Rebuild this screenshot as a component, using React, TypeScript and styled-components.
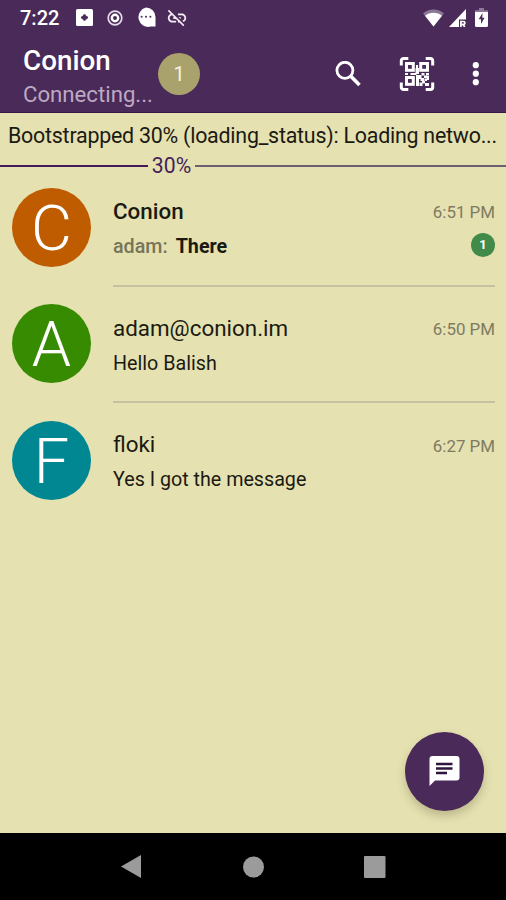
import React from "react";
import styled, { createGlobalStyle } from "styled-components";

const PURPLE = "#4a2a58";
const SAND = "#e5e1b1";

const GlobalStyle = createGlobalStyle`
  * { box-sizing: border-box; }
  body { margin: 0; background: ${SAND}; }
`;

const Screen = styled.div`
  position: relative;
  display: flex;
  flex-direction: column;
  width: 506px;
  height: 900px;
  overflow: hidden;
  background: ${SAND};
  font-family: Roboto, "Liberation Sans", sans-serif;
  color: #1b1a12;
`;

const StatusBar = styled.header`
  display: flex;
  align-items: center;
  justify-content: space-between;
  height: 35px;
  padding: 0 18px 0 20px;
  background: ${PURPLE};
  color: #fff;
`;

const StatusGroup = styled.div`
  display: flex;
  align-items: center;
  svg { display: block; }
`;

const Clock = styled.span`
  width: 56px;
  padding-top: 1px;
  font-size: 20px;
  font-weight: 500;
  line-height: 35px;
`;

const Gap = styled.span<{ $w: number }>`
  width: ${(p) => p.$w}px;
`;

const AppBar = styled.div`
  display: flex;
  align-items: center;
  height: 78px;
  padding: 0 17px 0 23px;
  background: ${PURPLE};
  border-bottom: 1px solid #3a1649;
  color: #fff;
`;

const TitleBlock = styled.div`
  width: 135px;
  padding-top: 7px;
  white-space: nowrap;
`;

const Title = styled.h1`
  margin: 0;
  font-size: 27.8px;
  font-weight: 500;
  line-height: 34px;
`;

const Subtitle = styled.div`
  font-size: 22.2px;
  line-height: 33px;
  color: #bda9c4;
`;

const CountBadge = styled.div`
  width: 42px;
  height: 42px;
  margin-right: auto;
  border-radius: 50%;
  background: #a9a26c;
  color: #f5f2e4;
  font-size: 20px;
  line-height: 43px;
  text-align: center;
`;

const IconButton = styled.button<{ $mr?: number }>`
  display: flex;
  padding: 0;
  margin: 0 ${(p) => p.$mr ?? 0}px 0 0;
  border: 0;
  background: none;
  color: inherit;
`;

const Notice = styled.div`
  height: 44px;
  padding: 0 8px;
  font-size: 21.4px;
  letter-spacing: -0.23px;
  line-height: 45px;
  white-space: nowrap;
`;

const Progress = styled.div`
  display: flex;
  align-items: center;
  height: 18px;
`;

const Track = styled.span<{ $done?: boolean }>`
  height: 2px;
  ${(p) => (p.$done ? "width: 148px;" : "flex: 1;")}
  background: ${(p) => (p.$done ? "#441a58" : "#6d6070")};
`;

const Percent = styled.span`
  width: 47px;
  font-size: 21.2px;
  line-height: 20px;
  text-align: center;
  color: #44245a;
`;

const ChatList = styled.main`
  flex: 1;
  padding-top: 13px;
`;

const Row = styled.article`
  display: flex;
  height: 116.3px;
  padding: 0 11px 0 12px;
`;

const Avatar = styled.div<{ $color: string }>`
  flex: none;
  width: 79px;
  height: 79px;
  margin-right: 22px;
  border-radius: 50%;
  background: ${(p) => p.$color};
  color: #fff;
  font-size: 63px;
  font-weight: 300;
  line-height: 81px;
  text-align: center;
`;

const RowBody = styled.div<{ $line: boolean; $unread: boolean }>`
  flex: 1;
  height: 99px;
  border-bottom: ${(p) => (p.$line ? "2px solid #c6c2a0" : "0")};
  padding-top: ${(p) => (p.$unread ? 5 : 6)}px;
`;

const Line = styled.div`
  display: flex;
  align-items: center;
  justify-content: space-between;
  height: 35px;
  white-space: nowrap;
`;

const Name = styled.span<{ $unread: boolean }>`
  font-size: 22.4px;
  font-weight: ${(p) => (p.$unread ? 500 : 400)};
`;

const Time = styled.time`
  padding-top: 3px;
  font-size: 16.9px;
  color: #7e7b62;
`;

const Message = styled.span<{ $unread: boolean }>`
  padding-top: ${(p) => (p.$unread ? 2 : 1)}px;
  font-size: 19.7px;
  font-weight: ${(p) => (p.$unread ? 700 : 400)};
`;

const Sender = styled.span`
  margin-right: 8px;
  font-weight: 500;
  color: #77745a;
`;

const Unread = styled.span`
  width: 24px;
  height: 24px;
  margin-top: -1px;
  border-radius: 50%;
  background: #428a4a;
  color: #fff;
  font-size: 13px;
  font-weight: 700;
  line-height: 24px;
  text-align: center;
`;

const Fab = styled.button`
  position: absolute;
  right: 22px;
  bottom: 89.5px;
  display: flex;
  align-items: center;
  justify-content: center;
  width: 79px;
  height: 79px;
  padding: 0;
  border: 0;
  border-radius: 50%;
  background: ${PURPLE};
  box-shadow: 0 5px 9px rgba(70, 65, 30, 0.25);
`;

const NavBar = styled.nav`
  display: flex;
  align-items: center;
  justify-content: space-between;
  height: 67px;
  padding: 0 120px;
  background: #000;
`;

const AppBoxIcon = () => (
  <svg width="17" height="17" viewBox="0 0 17 17">
    <rect width="17" height="17" rx="1.5" fill="#fff" />
    <path d="M8.5 5.2v6.6M5 8.5h7" stroke={PURPLE} strokeWidth="2" />
    <circle cx="8.5" cy="8.5" r="2.5" fill={PURPLE} />
  </svg>
);

const TargetIcon = () => (
  <svg width="16" height="16" viewBox="0 0 16 16">
    <circle cx="8" cy="8" r="6.8" fill="none" stroke="#e4dae8" strokeWidth="1.7" />
    <circle cx="8" cy="8" r="3.2" fill={PURPLE} stroke="#fff" strokeWidth="2.4" />
  </svg>
);

const BubbleIcon = () => (
  <svg width="21" height="21" viewBox="0 0 21 21">
    <path d="M10 .5a9.5 9.5 0 0 1 9.5 9.5v9.600h-5A9.500 9.500 0 1 1 10 .5z" fill="#fff" />
    <g fill={PURPLE}>
      <circle cx="5.6" cy="9.700" r="1" />
      <circle cx="10" cy="9.700" r="1" />
      <circle cx="14.400" cy="9.700" r="1" />
    </g>
  </svg>
);

const LinkOffIcon = () => (
  <svg width="22" height="22" viewBox="0 0 24 24" fill="#f3edf5">
    <path d="M17 7h-4v1.9h4c1.71 0 3.1 1.39 3.1 3.1 0 1.43-.98 2.63-2.31 2.98l1.46 1.46C20.88 15.61 22 13.95 22 12c0-2.76-2.24-5-5-5zm-1 4h-2.19l2 2H16zM2 4.27l3.11 3.11C3.29 8.12 2 9.91 2 12c0 2.76 2.24 5 5 5h4v-1.9H7c-1.71 0-3.1-1.39-3.1-3.1 0-1.59 1.21-2.9 2.76-3.07L8.73 11H8v2h2.73L13 15.27V17h1.73l4.01 4L20 19.74 3.27 3 2 4.27z" />
  </svg>
);

const WifiIcon = () => (
  <svg width="21" height="18" viewBox="0 0 21 18">
    <path d="M10.5 17.5 0 4.3C3 1.8 6.6.5 10.5.5S18 1.8 21 4.3z" fill="#8d7797" />
    <path d="M10.5 17.5 2 6.8c2.4-2 5.3-3 8.5-3s6.1 1 8.5 3z" fill="#fff" />
  </svg>
);

const SignalIcon = () => (
  <svg width="17" height="18" viewBox="0 0 17 18">
    <path d="M0 18 17 0v18z" fill="#fff" />
    <path d="M10 10.500H17V18H10z" fill={PURPLE} />
    <path d="M11.900 18v-5.500h2.600a1.400 1.400 0 0 1 0 2.800h-2.600M13.800 15.300l2 2.700" fill="none" stroke="#fff" strokeWidth="1.700" />
  </svg>
);

const BatteryIcon = () => (
  <svg width="13" height="19" viewBox="0 0 13 19">
    <path d="M4 0h5v2.2h4V6H0V2.2h4z" fill="#8d7797" />
    <path d="M0 4h13v13.5a1.5 1.5 0 0 1-1.5 1.5h-10A1.5 1.5 0 0 1 0 17.5z" fill="#fff" />
    <path d="M7.500 5 3.700 11.300h2.300v4.700l3.600-6.200H7.300z" fill={PURPLE} />
  </svg>
);

const SearchIcon = () => (
  <svg width="26" height="26" viewBox="0 0 26 26" fill="none" stroke="#fff">
    <circle cx="9.900" cy="9.300" r="8" strokeWidth="2.800" />
    <path d="m15.800 15.200 8.700 8.700" strokeWidth="3.600" />
  </svg>
);

const QrScanIcon = () => (
  <svg width="36" height="36" viewBox="0 0 36 36" fill="none" stroke="#fff">
    <path
      d="M2.300 9.500V4.800a2.300 2.300 0 0 1 2.300-2.300h4.700M26.700 2.500h4.700a2.300 2.300 0 0 1 2.300 2.300v4.700M33.700 26.500v4.700a2.300 2.300 0 0 1-2.300 2.300h-4.700M9.300 33.500H4.600a2.300 2.300 0 0 1-2.300-2.300v-4.700"
      strokeWidth="3"
    />
    <g strokeWidth="3">
      <rect x="7.500" y="7.500" width="6.800" height="6.800" />
      <rect x="21.700" y="7.500" width="6.800" height="6.800" />
      <rect x="7.500" y="21.500" width="6.800" height="6.800" />
    </g>
    <g fill="#fff" stroke="none">
      <path d="M17 9h2v4h-2zM16.500 12h3.500v6h-3.500zM6 17h3v2H6zM11.500 17h6v2h-6zM22.500 17h3v2.500h-3zM27 17h3v2.500h-3z" />
      <path d="M17 19h5.500v3h2.500v3h-3.500v-2h-1.500v7h-3zM25 19.500h3V22h-3zM25.500 22.500h2.500v2.500h-2.500zM28 20h2v4h-2zM20.500 26.500h3v3.500h-3zM23 25h3v2.500h-3zM26 27h4v3h-4z" />
    </g>
  </svg>
);

const MoreIcon = () => (
  <svg width="26" height="26" viewBox="0 0 26 26" fill="#fff">
    <circle cx="12.800" cy="4.200" r="3.100" />
    <circle cx="12.800" cy="12.700" r="3.100" />
    <circle cx="12.800" cy="21.200" r="3.100" />
  </svg>
);

const MessageIcon = () => (
  <svg width="31" height="30" viewBox="0 0 31 30">
    <path d="M3.500 0h24A3 3 0 0 1 30.500 3v18.500a3 3 0 0 1-3 3H6L.5 30V3a3 3 0 0 1 3-3z" fill="#fff" />
    <g stroke="#30143d" strokeWidth="2.500">
      <path d="M7 8h16.500M7 12.500h16.500M7 17h11" />
    </g>
  </svg>
);

const chats = [
  { initial: "C", color: "#bf5c00", name: "Conion", time: "6:51 PM", sender: "adam:", text: "There", unread: 1 },
  { initial: "A", color: "#368b00", name: "adam@conion.im", time: "6:50 PM", text: "Hello Balish", unread: 0 },
  { initial: "F", color: "#008792", name: "floki", time: "6:27 PM", text: "Yes I got the message", unread: 0 },
];

export default function App() {
  return (
    <Screen>
      <GlobalStyle />
      <StatusBar>
        <StatusGroup>
          <Clock>7:22</Clock>
          <AppBoxIcon />
          <Gap $w={14} />
          <TargetIcon />
          <Gap $w={13} />
          <BubbleIcon />
          <Gap $w={9} />
          <LinkOffIcon />
        </StatusGroup>
        <StatusGroup>
          <WifiIcon />
          <Gap $w={5} />
          <SignalIcon />
          <Gap $w={9} />
          <BatteryIcon />
        </StatusGroup>
      </StatusBar>
      <AppBar>
        <TitleBlock>
          <Title>Conion</Title>
          <Subtitle>Connecting...</Subtitle>
        </TitleBlock>
        <CountBadge>1</CountBadge>
        <IconButton $mr={38} aria-label="Search"><SearchIcon /></IconButton>
        <IconButton $mr={28} aria-label="Scan QR code"><QrScanIcon /></IconButton>
        <IconButton aria-label="More"><MoreIcon /></IconButton>
      </AppBar>
      <Notice>Bootstrapped 30% (loading_status): Loading netwo...</Notice>
      <Progress>
        <Track $done />
        <Percent>30%</Percent>
        <Track />
      </Progress>
      <ChatList>
        {chats.map((c, i) => (
          <Row key={c.name}>
            <Avatar $color={c.color}>{c.initial}</Avatar>
            <RowBody $line={i < chats.length - 1} $unread={c.unread > 0}>
              <Line>
                <Name $unread={c.unread > 0}>{c.name}</Name>
                <Time>{c.time}</Time>
              </Line>
              <Line>
                <Message $unread={c.unread > 0}>
                  {c.sender && <Sender>{c.sender}</Sender>}
                  {c.text}
                </Message>
                {c.unread > 0 && <Unread>{c.unread}</Unread>}
              </Line>
            </RowBody>
          </Row>
        ))}
      </ChatList>
      <Fab aria-label="New chat"><MessageIcon /></Fab>
      <NavBar>
        <svg width="22" height="25" viewBox="0 0 22 25"><path d="M1 12.500 21 1v23z" fill="#9b9b9b" /></svg>
        <svg width="22" height="22" viewBox="0 0 22 22"><circle cx="11.500" cy="11" r="10.500" fill="#9b9b9b" /></svg>
        <svg width="22" height="22" viewBox="0 0 22 22"><rect width="21.500" height="22" rx="1" fill="#9b9b9b" /></svg>
      </NavBar>
    </Screen>
  );
}
